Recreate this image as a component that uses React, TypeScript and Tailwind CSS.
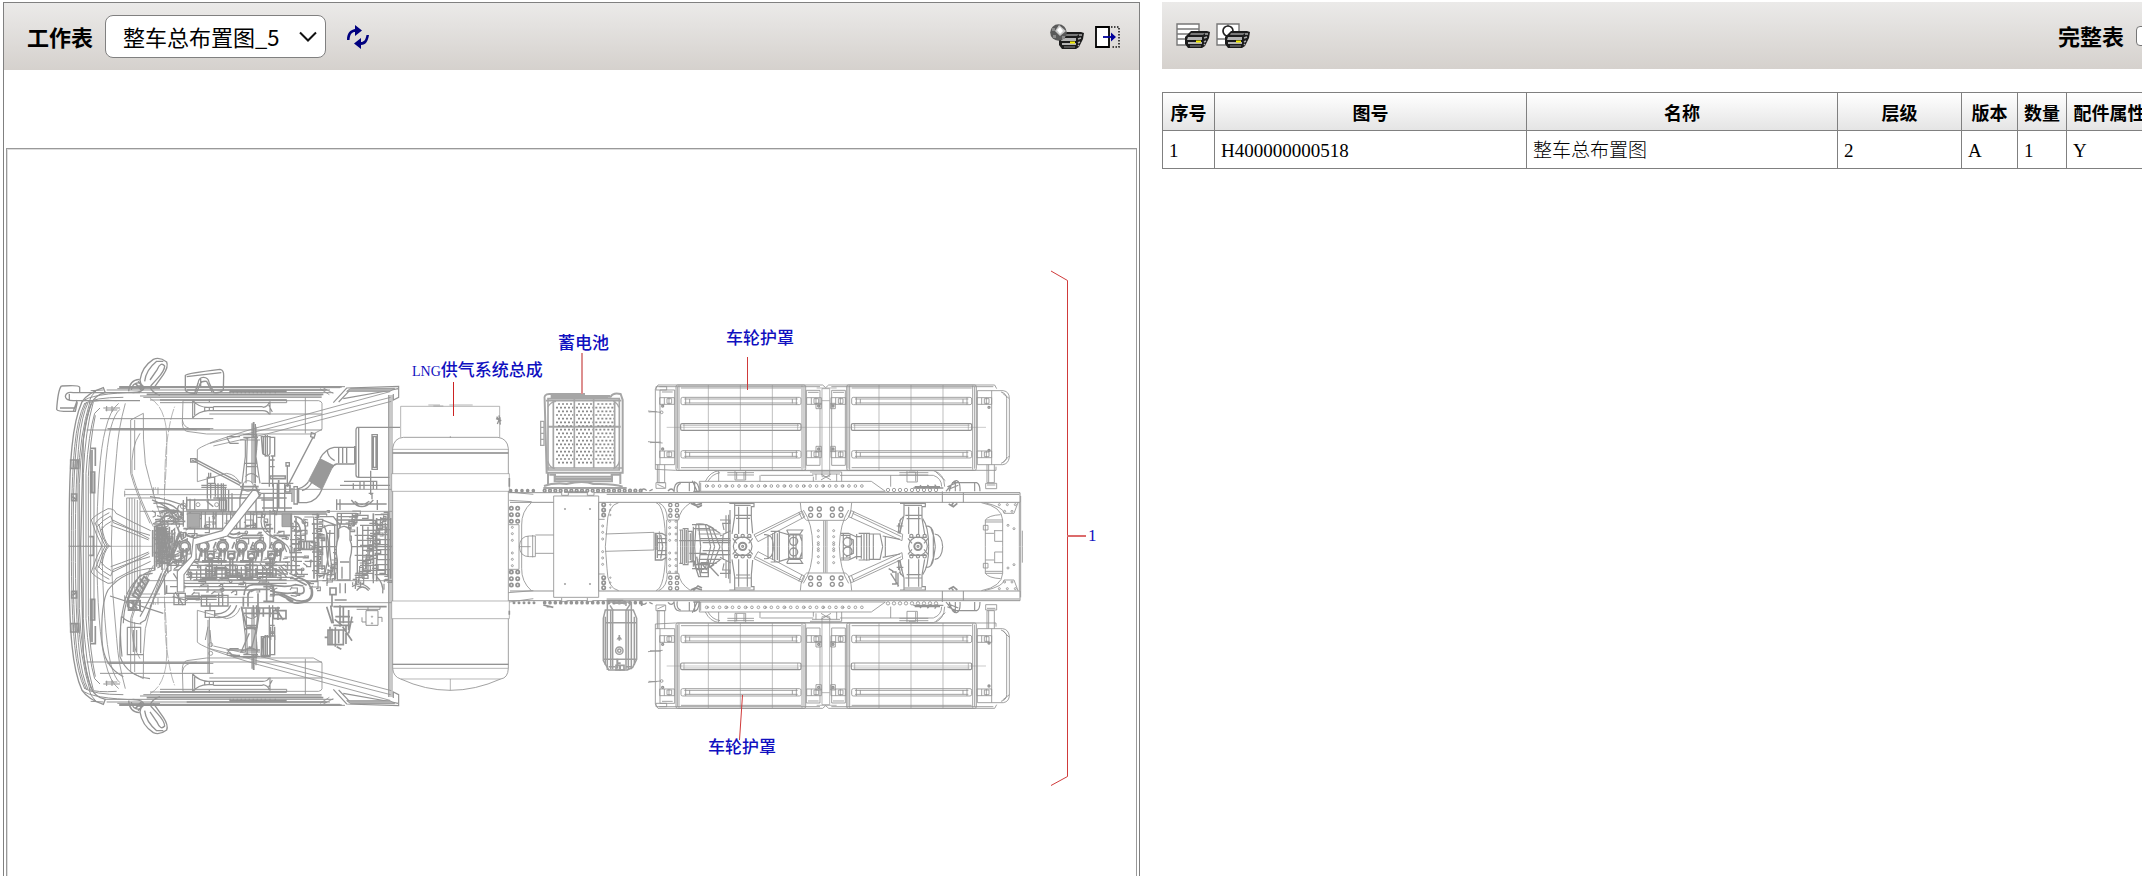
import { useState } from "react";

const range = (n: number) => Array.from({ length: n }, (_, i) => i);

const uiFont = "font-['Noto_Sans_CJK_SC',sans-serif]";

function RefreshIcon() {
  return (
    <svg width="22" height="24" viewBox="0 0 22 24" fill="#00007f">
      <path d="M0 15 C0 8 3 5 8 4 V0 L15 5.500 L8 11 V7 C5 7 3 9 2.500 15Z" />
      <path d="M22 10 C21 16 19 20 14 20 V24 L7 18.500 L14 13 V17 C17 17 18.500 15 19.500 10Z" />
    </svg>
  );
}

function Printer() {
  return (
    <g>
      <path d="M15 8 H31 L34 9 L33 15 L29 23 L26 25 H12 L9 21 V14Z" fill="#1c1c1c" />
      <path d="M15 10 H29 L27 12 H14Z" fill="#777" />
      <path d="M12 14 H26 V17 H11Z M12 19 H26 V21 H12Z" fill="#b4b4b4" />
      <path d="M14 23 H25" stroke="#888" />
      <path d="M20 17.500 H25 V19.500 H20Z" fill="#f4ee00" />
      <path d="M29 11 H32 M28 15 L31 14 M28 19 L30 18 M28 22 L29 21" stroke="#aaa" strokeWidth="1.500" />
    </g>
  );
}

function PrintViewIcon() {
  return (
    <svg width="34" height="25" viewBox="0 0 34 25">
      <Printer />
      <circle cx="8.500" cy="8.500" r="8.300" fill="#5a5a5a" />
      <path d="M2 4 H5 V7 H2Z M3 11 H6 V14 H3Z M12 12 H15 V15 H12Z" fill="#8a8a8a" />
      <path d="M9 1 L16 7 L10 12 L5 7Z" fill="#c9c9c9" />
      <path d="M10 3 L13 7 L10 10 L7 6Z" fill="#fff" />
    </svg>
  );
}

function ExpandIcon() {
  return (
    <svg width="25" height="22" viewBox="0 0 25 22" fill="none">
      <path d="M1 1 H14 V21 H1Z" fill="#fff" stroke="#000" strokeWidth="1.800" />
      <path d="M16 1 H24 V21 H16" stroke="#111" strokeWidth="1.500" strokeDasharray="1.500 1.500" />
      <path d="M8 11 H18" stroke="#00009b" strokeWidth="1.800" />
      <path d="M16 6.500 L21 11 L16 15.500Z" fill="#00009b" />
    </svg>
  );
}

function PrintListIcon() {
  return (
    <svg width="34" height="25" viewBox="0 0 34 25">
      <path d="M1 1 H23 V22 H1Z M1 6 H23 M1 11 H23 M1 16 H23" fill="#fff" stroke="#777" strokeWidth="1.400" />
      <Printer />
    </svg>
  );
}

function PrintDrawingIcon() {
  return (
    <svg width="34" height="25" viewBox="0 0 34 25">
      <path d="M1 1 H23 V22 H1Z M1 16 H23 M12 1 V16" fill="#fff" stroke="#777" strokeWidth="1.400" />
      <circle cx="12" cy="8" r="5" fill="#fff" stroke="#222" strokeWidth="1.700" />
      <Printer />
    </svg>
  );
}

function Holes({ x, y, n, dx, r = 4 }: { x: number; y: number; n: number; dx: number; r?: number }) {
  return (
    <>
      {range(n).map((i) => (
        <circle key={i} cx={x + i * dx} cy={y} r={r} />
      ))}
    </>
  );
}

function Bar({ x, y, w }: { x: number; y: number; w: number }) {
  return (
    <g>
      <rect x={x} y={y} width={w} height="22" rx="5" />
      <path d={`M${x + 10} ${y + 5} H${x + w - 10} M${x + 10} ${y + 17} H${x + w - 10} M${x + 14} ${y} v22 M${x + 26} ${y + 5} v13 M${x + w - 14} ${y} v22 M${x + w - 26} ${y + 5} v13`} />
    </g>
  );
}

// one fender plate with its three ribs
function Plate({ x }: { x: number }) {
  return (
    <g>
      <rect x={x} y="195" width="389" height="256" rx="5" />
      <path d={`M${x + 4} 200 V446 M${x + 9} 197 V449 M${x + 378} 197 V449 M${x + 384} 200 V446 M${x + 15} 204 H${x + 375} M${x + 15} 443 H${x + 375}`} />
      <path d={`M${x + 97} 195 V451 M${x + 193} 195 V451 M${x + 289} 195 V451`} strokeWidth="1.800" />
      <Bar x={x + 15} y={232} w={360} />
      <Bar x={x + 15} y={392} w={360} />
      <rect x={x + 14} y="311" width="361" height="20" rx="4" strokeWidth="3.500" />
      <path d={`M${x + 20} 316 H${x + 369} M${x + 24} 311 V331 M${x + 365} 311 V331`} strokeWidth="1.800" />
    </g>
  );
}

function Clamp({ x, y }: { x: number; y: number }) {
  return <path d={`M${x} ${y} h44 v20 h-44z M${x + 14} ${y} v20 M${x + 22} ${y + 3} h14 v14 h-14z M${x + 28} ${y} v20`} />;
}

function WheelCover() {
  return (
    <g>
      <path d="M46 208 L54 195 H548 L557 203 L566 195 H1064 L1070 206 M46 208 V448 L106 451 H1068 V440 M58 200 H540 M574 200 H1060" />
      <Plate x={108} />
      <Plate x={620} />
      <path d="M80 322 H1038" strokeWidth="1.500" />
      <path d="M60 210 H104 V434 H46 M60 210 V434 M66 216 H98 M48 200 H80 V210 H48Z M499 211 H540 V436 H499Z M575 211 H616 V436 H575Z M504 217 H536 M579 217 H612" />
      <path d="M546 206 H569 V470 H546Z M530 204 H590 M546 242 H569" strokeWidth="2" />
      <path d="M1012 212 H1090 Q1108 215 1108 235 V412 Q1105 432 1088 434 H1012Z M1055 212 V434 M1083 216 Q1100 220 1100 236 V410 Q1100 424 1083 430 M1088 220 L1108 236 M1088 428 L1108 408" />
      {[233, 393].map((y) => (
        <g key={y}>
          <Clamp x={59} y={y} />
          <Clamp x={500} y={y} />
          <Clamp x={573} y={y} />
          <Clamp x={1011} y={y} />
        </g>
      ))}
      <path d="M528 250 H544 V266 H528Z M572 250 H586 V266 H572Z M528 379 H544 V395 H528Z M572 379 H586 V395 H572Z" />
      {[258, 387].map((y) => (
        <g key={y} strokeWidth="4">
          <circle cx="536" cy={y} r="3" />
          <circle cx="579" cy={y} r="3" />
          <circle cx="68" cy={y} r="3" />
          <circle cx="1047" cy={y + 4} r="3" />
        </g>
      ))}
      <path d="M24 273 L62 277 M26 276 L50 275 M24 365 L68 369 M30 368 L62 366" />
      <circle cx="65" cy="277" r="4" />
      <path d="M52 434 V488 H74 V434 M57 434 V488 M48 488 H77 V505 H48Z M52 493 L74 503 M1041 434 V488 H1063 V434 M1046 434 V488 M1037 490 H1070 V506 H1037Z M1041 495 H1066" />
      <path d="M285 452 V480 H317 V452 M290 456 V478 M312 456 V478 M262 458 H342 M262 465 H342 M801 452 V486 H832 V452 M806 456 H827 V484 M778 458 H865 M778 465 H865" />
      <path d="M196 484 Q210 455 238 452 H880 Q913 460 914 500 M204 484 Q216 462 240 458 M236 452 V484 M360 466 V484 M362 466 H520 M600 466 H880 M752 466 V500 M880 466 Q905 475 905 500 M888 456 L916 482" />
      <path d="M178 484 H694 L736 514 H178Z M182 488 V514 M510 456 H605 V484 M516 462 H600 M520 470 V484 M528 462 V480 M590 462 V484 M543 462 L573 480 M573 462 L543 480" />
      <Holes x={200} y={498} n={25} dx={19.4} />
      <Holes x={204} y={498} n={8} dx={58} r={2} />
      <path d="M102 516 Q102 488 118 487 H160 Q176 484 178 516 M112 516 Q108 495 122 490 M148 488 V514 M157 482 L172 515 M164 484 V514 M928 514 Q936 480 950 482 Q962 486 960 514 M936 488 H1010 Q1020 492 1020 514 M1004 490 V514 M946 482 V514 M922 500 L950 488 M926 508 L955 496 M918 514 L934 494" strokeWidth="3.500" />
      <Holes x={744} y={510} n={9} dx={18} r={5} />
      <path d="M820 504 H910 M824 500 H900 M840 496 L850 506 M862 495 L874 507 M884 494 L894 507" strokeWidth="4" />
      <path d="M2 512 Q12 502 20 512 M28 513 L38 508 M84 513 Q94 501 102 513 M160 514 H178" strokeWidth="4" />
    </g>
  );
}

// the half of the frame above the centre line
function FrameHalf() {
  return (
    <g>
      <path d="M-393 518 H1140 V547 H-390 M-100 523 H1138 M907 514 V547 M970 518 V547" strokeWidth="3" />
      <path d="M48 548 Q76 556 77 680 M56 548 Q82 560 82 600 H116 Q118 570 152 548 M112 600 V680 M80 600 V680" />
      {range(3).map((i) => (
        <g key={i} strokeWidth="4">
          <circle cx="91" cy={555 + i * 16} r="5" />
          <circle cx="111" cy={555 + i * 16} r="5" />
        </g>
      ))}
      {range(4).map((i) => (
        <g key={i}>
          <circle cx="89" cy={604 + i * 19} r="3" />
          <circle cx="108" cy={604 + i * 19} r="3" />
          <circle cx="535" cy={632 + i * 18} r="3" />
          <circle cx="581" cy={632 + i * 18} r="3" />
        </g>
      ))}
      <path d="M481 548 Q483 590 500 601 H617 Q633 590 635 548 M490 570 Q518 610 518 680 M626 570 Q600 610 598 680 M551 602 V680 M556 602 V680 M561 602 V680" />
      {[512, 538, 577, 603].map((x) => (
        <g key={x} strokeWidth="4">
          <circle cx={x} cy="567" r="6" />
          <circle cx={x} cy="586" r="6" />
        </g>
      ))}
      <path d="M342 644 L486 573 L494 591 L354 665Z M346 650 L484 580 M476 576 L486 596 M788 643 L634 572 L626 590 L786 662Z M784 650 L638 580 M642 574 L634 594" />
      <path d="M268 550 H342 V560 H334 V595 L338 640 M284 550 V590 L276 642 M286 556 H332 M286 586 H334 M288 595 H330 M296 560 V642 M322 560 V642 M270 570 V680 M780 550 H856 V560 H846 V595 L854 642 M792 550 V586 L778 640 M794 556 H846 M796 586 H846 M800 596 H842 M806 560 V642 M836 560 V642" strokeWidth="3.500" />
      <path d="M118 630 H128 V680 M128 626 H144 V680 M144 634 H156 V680 M156 614 H200 L240 640 M160 620 V680 M168 616 L164 680 M176 614 L182 680 M196 614 L212 680 M206 618 L224 680 M216 622 L240 680 M160 626 H210 M168 612 Q196 608 222 626 M240 600 H270 V610 H248 L252 630 M258 586 V640 M266 584 V680 M240 648 L272 632 M230 656 H270 M250 640 L246 680" strokeWidth="3.500" />
      <path d="M122 630 V680 M134 626 V680 M139 630 V680 M151 640 V680 M172 630 H230 M176 642 H244 M180 656 H262 M188 668 H270" strokeWidth="3.500" />
      <path d="M44 640 H66 L80 648 M46 640 V680 M52 646 V680 M62 644 L68 680 M50 656 H80 M50 668 H80" strokeWidth="4" />
      <path d="M392 634 H418 V680 M398 640 V680 M404 634 V680 M412 640 V680 M418 636 L446 644 V680 M440 630 H488 L480 642 H448 M440 630 L450 650 M450 645 H486 V680 M460 645 V680 M468 642 V680 M478 642 L486 664 M384 646 V680 M372 644 Q400 640 400 680" strokeWidth="3.500" />
      <circle cx="461" cy="664" r="12" strokeWidth="4" />
      <path d="M602 640 H626 L648 650 H664 V680 M602 646 H630 V680 M610 640 V680 M618 650 L640 660 V680 M650 642 V680 M656 640 H688 V680 M664 644 V680 M672 640 V680 M680 638 V680 M688 642 H720 L728 680 M700 642 V680 M728 648 L780 658 M736 650 V680" strokeWidth="3.500" />
      <circle cx="623" cy="666" r="13" strokeWidth="4" />
      <path d="M856 618 Q876 616 880 640 V680 M848 596 Q866 620 866 680 M872 622 Q884 650 886 680 M884 642 Q906 644 908 680 M778 604 L790 590 M776 610 V640 M770 618 H790 M782 596 L774 640 M786 608 L780 640" strokeWidth="3.500" />
      <path d="M1024 548 Q1086 560 1088 600 V680 M1034 548 Q1092 562 1092 580 H1122 L1134 548 M1142 528 V680 M1147 632 V680 M1138 548 V680 M1036 600 H1088 M1036 606 H1088 M1036 600 V680 M1036 600 Q1046 586 1082 584 M1030 616 H1044 V630 H1030Z M1062 632 H1088 M1064 632 V664 H1088 M1036 640 H1062" />
      {[[1078, 554], [1102, 554], [1126, 554], [1094, 574], [1116, 574], [1104, 616], [1122, 626]].map(([x, y]) => (
        <circle key={x} cx={x} cy={y} r="3" />
      ))}
      <path d="M152 550 L166 556 L186 550 M160 548 L174 562 L186 556 M926 552 L940 560 L952 550 M940 548 L934 558" strokeWidth="5" />
    </g>
  );
}

function Hub({ x }: { x: number }) {
  return (
    <g strokeWidth="3.500">
      <circle cx={x} cy="679" r="28" fill="#fff" />
      <circle cx={x} cy="679" r="11" strokeWidth="6" />
      <circle cx={x} cy="679" r="3" />
      <path d={`M${x - 26} 652 h52 M${x - 26} 706 h52 M${x - 30} 655 L${x - 18} 670 M${x + 30} 655 L${x + 18} 670 M${x - 30} 703 L${x - 18} 688 M${x + 30} 703 L${x + 18} 688`} />
      {[-20, 0, 20].map((d) => (
        <g key={d}>
          <circle cx={x + d} cy="648" r="5" />
          <circle cx={x + d} cy="709" r="5" />
        </g>
      ))}
    </g>
  );
}

function Rear() {
  return (
    <g transform="translate(640 320) scale(.33333)">
      <WheelCover />
      <g transform="translate(0 1360) scale(1 -1)">
        <WheelCover />
      </g>
      <FrameHalf />
      <g transform="translate(0 1360) scale(1 -1)">
        <FrameHalf />
      </g>
      <path d="M118 662 H272 M148 700 H200 M160 720 L176 770 H205 V720 M184 728 H204 V758 H184Z M188 734 L200 750 M205 735 L236 768 M170 710 L182 768 M150 724 H166 V742 M756 756 H768 V792 H756 M752 760 L776 798 M746 746 L760 754 M774 758 V800" strokeWidth="4" />
      <Hub x={308} />
      <Hub x={834} />
    </g>
  );
}

function Tank() {
  return (
    <g transform="translate(380 320) scale(.33333)">
      <path d="M38 385 Q42 354 70 352 H354 Q382 356 385 385 V1045 Q384 1074 362 1077 Q210 1145 62 1077 Q40 1070 38 1045Z" fill="#fff" />
      <path d="M62 352 V259 H359 V352 M145 255 H180 M160 258 H190 M208 255 H278 M38 388 H385 M38 399 H385 M38 1033 H385 M38 1045 H385 M62 1077 H362" strokeWidth="2" />
      <path d="M38 399 H385 M38 1033 H385" strokeWidth="4" />
      <path d="M35 461 H388 V514 H35Z M35 843 H388 V896 H35Z" fill="#fff" strokeWidth="2" />
      <path d="M211 348 V354 M211 1077 V1112" strokeWidth="2" />
      <path d="M350 290 L357 300 L352 312 M360 292 V310 M348 296 L364 302 M357 286 L361 314" strokeWidth="4" />
      <path d="M385 516 L460 523 M388 541 L455 545 M385 818 L460 812 M388 846 L460 836" />
      <path d="M521 528 H656 V832 H521Z M545 516 V526 H565 V516 M622 516 V526 H642 V516 M545 834 V844 H565 M622 834 V844 H642" fill="#fff" />
      <g>
        <circle cx="555" cy="567" r="2" />
        <circle cx="630" cy="567" r="2" />
        <circle cx="555" cy="792" r="2" />
        <circle cx="630" cy="792" r="2" />
      </g>
      <path d="M454 548 Q424 575 425 615 V745 Q424 785 454 812 M716 548 Q682 555 681 620 L676 680 L681 745 Q682 805 716 812 M386 614 H417 V748 H386 M656 598 H674 M656 762 H674 M656 548 V812" />
      {[565, 584, 604, 756, 776, 795].map((y) => (
        <g key={y} strokeWidth="5">
          <circle cx="394" cy={y} r="5" />
          <circle cx="413" cy={y} r="5" />
        </g>
      ))}
      {[554, 570, 585, 773, 788, 803].map((y) => (
        <g key={y}>
          <circle cx="671" cy={y} r="5" strokeWidth="5" />
          <circle cx="691" cy={y} r="2" />
        </g>
      ))}
      {[622, 641, 661, 699, 718, 737].map((y) => (
        <g key={y}>
          <circle cx="397" cy={y} r="3" />
          <circle cx="668" cy={y - 4} r="3" />
        </g>
      ))}
      <path d="M418 680 Q420 648 448 648 H466 V710 H448 Q420 710 418 680Z M458 645 V712 M466 645 H521 M466 700 H521 M444 648 V710 M418 680 H452 M676 642 L822 637 M676 694 L822 690 M822 637 V690 M830 640 V690 M838 634 V690" />
      <g strokeWidth="5">
        <Holes x={392} y={512} n={5} dx={17} r={3} />
        <Holes x={494} y={512} n={19} dx={16} r={4} />
        <Holes x={402} y={848} n={5} dx={15} r={2} />
        <Holes x={494} y={848} n={19} dx={16} r={3} />
        <path d="M388 474 V500 M388 872 V884 M490 855 L520 862 M500 860 H510 M552 516 H620 M680 842 H730 M785 842 V858" />
      </g>

      {/* battery box */}
      <g stroke="#a6a6a6">
        <path d="M494 240 Q490 222 508 222 H612 V230 H692 Q700 216 722 222 L728 240 V458 H500Z" strokeWidth="6" />
        <path d="M504 236 V450 H718 V236Z M520 240 V446 M704 240 V446 M498 242 H724 M500 444 H726 M583 236 V446 M641 236 V446" strokeWidth="5" />
        <path d="M504 320 H722 M512 228 H690 M512 234 H684" strokeWidth="6" />
        <path d="M504 260 Q512 246 528 244 M700 244 Q714 250 716 262 M504 424 Q508 442 524 446 M700 446 Q716 438 718 424 M482 304 H492 V376 H482Z M482 322 H492 M482 340 H492 M482 358 H492" strokeWidth="4" />
        <path d="M504 458 V492 M721 458 V492 M524 470 H696 V484 H524Z M526 477 H694 M508 464 H528 M692 464 H718 M492 498 Q520 488 560 492 Q610 480 640 492 Q700 490 728 500 M490 504 H740" strokeWidth="6" />
        <g stroke="#8a8a8a" strokeWidth="5" strokeDasharray="6 6">
          {range(17).map((i) => (
            <path key={i} d={`M${i % 2 ? 528 : 534} ${252 + i * 11} H580 M${i % 2 ? 588 : 594} ${252 + i * 11} H638 M${i % 2 ? 646 : 652} ${252 + i * 11} H702`} />
          ))}
        </g>
      </g>

      {/* air reservoir */}
      <g strokeWidth="4.500" stroke="#9e9e9e">
        <path d="M676 870 H760 L770 895 V1018 L758 1042 L742 1050 H686 L670 1022 V895Z" />
        <path d="M682 842 V1050 M692 870 V1048 M698 870 V1048 M738 870 V1048 M745 870 V1048 M754 846 V1048 M674 908 H768 M672 1018 H768 M676 890 V1035 M763 890 V1035 M686 846 H754 M690 856 L700 872 M738 872 L752 850 M704 850 H738 V858 M686 1040 H706 M736 1040 H752" />
        <path d="M718 945 V962 M714 956 Q718 950 722 956Z M708 1036 V1050 H732 V1036Z" strokeWidth="5" />
        <circle cx="718" cy="992" r="11" />
        <circle cx="718" cy="992" r="5" />
        <path d="M712 1016 V1046 M722 1030 H714 M720 1038 V1052" strokeWidth="6" />
      </g>
    </g>
  );
}

// shell of the cab above the centre line
function CabHalf() {
  return (
    <g>
      <path d="M88 619 Q86 420 96 320 Q104 235 126 185 Q145 158 190 143 L196 158 Q165 165 155 190 Q138 225 130 300 L122 619" strokeWidth="4" />
      <path d="M94 619 Q94 420 104 320 Q112 235 134 190 M106 619 Q106 410 118 300 Q126 225 144 188 M114 619 V420 Q120 280 150 185 M130 619 V400 Q136 270 160 186 M138 619 V400 Q146 280 164 220 L180 204 M152 619 V330 M162 619 V400" strokeWidth="3" />
      <path d="M100 619 Q98 420 110 310 Q118 232 140 186 M118 619 V430 Q124 290 153 190 M145 619 V410 Q150 300 166 226" strokeWidth="3" />
      <path d="M92 360 H116 V385 H92Z M95 462 H110 V482 H95Z M152 325 H166 V378 M152 396 H164 V458 H152Z M148 590 H160 V619 M98 470 L108 478 M156 330 V455 M100 364 V382 M108 362 V384" strokeWidth="5" />
      <path d="M126 186 Q150 160 300 156 M132 192 Q160 172 250 172 M146 188 Q170 178 230 182 M152 152 L190 150 M170 150 Q150 170 148 184 M190 204 H240 M196 210 H232 M200 198 V214 M216 198 V216" strokeWidth="3" />
      <path d="M170 619 Q172 360 196 270 Q210 210 236 190 M186 619 Q190 360 212 265 Q224 220 240 208 M214 619 Q214 480 230 340 Q234 270 256 190" />
      <path d="M376 619 Q370 440 378 330 Q388 240 404 200 M330 175 Q368 195 378 260 Q384 320 374 450" strokeWidth="2" strokeDasharray="34 4" />
      <path d="M238 140 H915 M238 143 H900 M200 150 H870 M196 158 H880 M300 168 H845 M310 172 H845 M330 180 H740 V188 H360 M232 146 H360 M180 236 H520 M140 270 H846 M202 266 H520" strokeWidth="3" />
      <path d="M238 141 H905 M205 267 H510 M440 150 H860 M570 154 H740 M320 163 H850 M360 180 H740" strokeWidth="5" />
      <path d="M570 152 V160 M580 150 V160 M592 152 V160 M604 150 V160 M616 150 V160 M628 152 V160 M640 150 V160 M652 152 V160 M664 150 V160 M676 152 V160 M690 150 V160 M706 150 V160" strokeWidth="4" />
      <path d="M429 182 H836 Q845 184 846 190 V268 L820 282 H500 L440 274 Q428 270 427 250Z M796 172 V280 M427 240 Q430 268 470 270" />
      <path d="M458 180 V234 M458 180 Q474 202 504 202 H520 V212 H504 Q476 214 458 234 M520 200 H668 M520 212 H668 M690 184 V224 M668 202 Q684 200 688 186 M668 212 Q684 212 688 224 M686 195 L697 216 M508 178 V186 M508 222 H846 M464 190 V226 M494 202 V214 M508 200 V214" strokeWidth="3.500" />
      <path d="M472 330 Q472 325 520 305 Q620 270 700 250 L1050 155 M472 330 V425 L560 400 Q590 404 600 432 M510 310 L1052 172 M520 318 L680 282 L1054 184" />
      <path d="M880 188 L920 144 L1076 139 V172 L1060 180 V162 M896 186 L932 148 M910 176 L1056 150 L1074 146" strokeWidth="3.500" />
      <path d="M920 154 L932 145 H1064 L1050 154 Z" fill="#b2b2b2" />
      <path d="M840 146 L868 164 M850 144 L880 160" />
      <path d="M306 148 L300 120 Q306 80 340 58 Q360 50 380 66 Q386 80 370 104 L340 146 M314 124 Q318 90 350 64 L370 64 M330 120 L352 88 Q362 64 374 78 Q374 92 352 116 L332 138 M266 154 Q268 120 298 118 M274 150 Q276 128 300 128 M278 158 Q310 158 314 140 H330 Q336 158 360 166" strokeWidth="4" />
      <path d="M286 130 L304 150 M294 124 L310 140 M300 142 H312 M290 138 H308" strokeWidth="5" />
      <path d="M300 280 Q272 320 276 400 Q296 470 340 560 M272 240 L310 220 M272 240 V400 Q288 460 330 550 M310 220 Q308 300 316 370 Q340 470 370 550 M284 240 V390" />
      <path d="M154 540 Q160 528 204 506 Q224 506 228 520 Q280 548 332 572 M164 552 Q176 534 208 518 M172 560 Q188 540 212 528 L220 548 Q270 570 330 586 M180 574 Q194 552 214 544 M218 540 Q280 570 328 596 M212 556 Q280 580 326 600 M154 540 Q166 580 186 619 M166 550 Q180 590 196 619 M186 560 Q190 600 208 619 M176 552 Q184 590 202 619" strokeWidth="3" />
      <path d="M254 448 H1056 M254 452 V470 M260 474 V619 M254 464 H640 M276 474 V619 M268 474 V619 M284 476 V619 M292 480 V619 M300 484 V619 M260 474 H360 M300 514 H1056 M340 442 V462 M354 442 V462 M346 442 V446" />
      <path d="M610 284 H650 V330 M616 300 V350 L606 430 M622 290 L618 430 M652 300 L648 350 L660 430 M636 250 V430 M642 246 V430 M648 260 V370 M600 300 H660 M610 292 H654 M614 370 H650 M620 380 H650 M616 410 Q634 390 654 412 M560 292 L570 310 H596 M562 290 H600 M640 246 V292" strokeWidth="3.500" />
      <path d="M664 290 H690 V340 Q684 356 668 340Z M670 290 V345 M676 285 V350 M682 285 V345 M692 292 H704 V348 H692 M688 348 V440 M698 348 V440 M690 360 H704 M690 380 H704" strokeWidth="4" />
      <path d="M1046 165 V619 M1050 165 V619 M1056 165 V619" strokeWidth="3" />
    </g>
  );
}

// pipes, bolts and brackets scattered over the powertrain
function Fittings() {
  return (
    <g strokeWidth="3.500">
      {range(90).map((i) => {
        const x = 400 + ((i * 137) % 450);
        const y = 512 + ((i * 71) % 250);
        return <path key={i} d={`M${x} ${y} h${8 + (i % 5) * 5} v${6 + (i % 4) * 5} h-${6 + (i % 3) * 4} M${x - 4} ${y + 6} l${6 + (i % 6) * 3} ${(i % 7) * 3 - 9}`} />;
      })}
      {range(70).map((i) => {
        const x = 860 + ((i * 53) % 180);
        const y = 512 + ((i * 89) % 218);
        return <path key={i} d={`M${x} ${y} h${8 + (i % 5) * 4} v${5 + (i % 4) * 4} h-${6 + (i % 3) * 4} M${x} ${y + 9} v${6 + (i % 5) * 3}`} />;
      })}
      {range(40).map((i) => {
        const x = 336 + ((i * 37) % 90);
        const y = 512 + ((i * 61) % 180);
        return <path key={i} d={`M${x} ${y} l${10 + (i % 4) * 4} ${6 - (i % 5) * 4} v${10 + (i % 3) * 4} l-8 4`} />;
      })}
      {range(26).map((i) => (
        <circle key={i} cx={400 + ((i * 97) % 460)} cy={516 + ((i * 43) % 240)} r={3 + (i % 3)} />
      ))}
    </g>
  );
}

function Engine() {
  return (
    <g>
      {/* intake hose and filter box */}
      <path d="M456 360 L600 436 M462 356 L604 430 M820 290 L742 440 M742 376 V440 M646 252 V430" strokeWidth="4" />
      <path d="M452 356 H468 V366 H452Z M738 368 H748 V378 H738Z M814 278 L826 282 L822 294 L812 290Z" strokeWidth="4" />
      <path d="M950 262 H1080 M952 262 Q948 264 948 270 V404 Q948 412 956 412 H1048 M956 262 V410 M944 318 V372 M948 322 H882 Q856 326 840 356 M944 372 H890 Q880 374 876 384" strokeWidth="4" />
      <path d="M840 356 L880 376 L846 448 L806 422Z" fill="#999" />
      <path d="M806 424 Q796 440 776 446 V488 H800 Q832 484 846 448 M816 426 Q806 446 786 452 M762 440 H772 V492 H762Z M756 444 V486 M862 330 Q862 350 884 362 M896 322 V370 M908 322 V370 M920 322 V370" strokeWidth="4" />
      <path d="M996 284 H1012 V388 H996Z M1000 290 H1008 V382 H1000Z M992 392 V464 M996 458 V478 M986 460 H1000" strokeWidth="4" />
      <path d="M900 436 H1050 M912 424 H1010 V448 M940 430 V448 M960 426 V448 M972 426 V448 M1000 424 V448 M890 478 V510 M900 478 V510 M934 480 Q964 520 1000 480 M944 484 Q964 504 988 484 M888 492 H1040 M1012 480 V510" strokeWidth="4" />

      <Fittings />

      {/* block outline and rails */}
      <path d="M440 480 H560 V510 H440Z M450 476 V512 M464 476 V512 M504 476 V512 M538 476 V512 M450 516 V566 H520 V516 M528 516 V566 H590 V516 M600 516 V566 H650 V516 M440 516 H860 M440 522 H860 M520 474 H740 M600 476 V516 M648 474 V516 M672 460 V514 M700 430 V514 M712 430 V514 M734 430 V514 M664 430 H760 M664 460 H756 M666 504 H756" strokeWidth="4" />
      <path d="M442 520 H480 V562 H442Z M726 522 H752 V560 H726Z" fill="#aaa" />
      <path d="M484 516 V566 M496 516 V566 M508 530 V566 M548 516 V566 M560 520 V566 M572 516 V566 M616 520 V566 M632 516 V566 M640 520 V566 M690 510 V620 M704 510 V580 M676 520 Q664 560 690 580 M668 520 Q650 570 700 594 Q750 610 750 640 M690 584 Q730 600 740 636" strokeWidth="3.500" />
      <path d="M430 566 H700 M436 576 Q440 592 462 590 M550 576 Q576 606 610 586 M560 572 Q576 592 600 576 M606 586 H670 M606 594 H664 M470 586 H540 M700 586 H750" strokeWidth="5" />
      <path d="M502 412 H524 V430 H502Z M506 398 V412 M512 398 V412 M502 430 V476 M512 430 V476 M484 436 H560 M484 442 H560 M526 430 V470 M534 430 V476 M544 430 V516 M550 430 V516 M556 440 V516 M566 450 V516 M576 460 V516 M500 484 L520 500" strokeWidth="4" />
      <circle cx="474" cy="494" r="6" />
      <circle cx="530" cy="494" r="6" />
      {[434, 490, 548, 604, 660, 716].map((x) => (
        <g key={x} strokeWidth="5">
          <circle cx={x} cy="619" r="17" fill="#fff" />
          <circle cx={x} cy="619" r="12" />
          <path d={`M${x - 8} 636 L${x - 14} 664 M${x + 8} 636 L${x + 4} 664 M${x - 5} 624 V650 M${x + 5} 624 V650 M${x - 20} 606 L${x - 28} 626`} />
        </g>
      ))}
      {[512, 574, 634, 694].map((x) => (
        <g key={x} strokeWidth="5">
          <path d={`M${x - 10} 634 H${x + 10} V654 H${x - 10}Z M${x - 4} 654 V714 M${x + 4} 654 V714 M${x - 18} 676 H${x + 18} M${x - 14} 684 V708 H${x + 14} V684`} />
          <circle cx={x} cy="650" r="9" />
        </g>
      ))}
      <path d="M396 666 H750 M380 676 H750 M400 690 H760 M440 702 H744 M440 712 H760 M460 720 H740 M400 700 L420 730 H740 M390 740 H620 M440 770 H530 M440 778 H530 M460 750 H640" strokeWidth="4" />
      <path d="M486 664 H560 M600 664 H640 M520 684 H560 M560 708 H610 M648 700 H700 M484 716 H530 M600 716 H640" strokeWidth="8" />
      <path d="M452 694 V720 M470 694 V720 M482 676 V716 M498 680 V716 M530 674 V716 M546 680 V720 M556 676 V716 M592 676 V718 M604 680 V718 M616 676 V716 M652 676 V718 M668 680 V716 M676 670 L726 700 M680 690 L710 664 M716 680 L740 712 M722 678 L744 700 M660 670 L676 690" strokeWidth="4" />

      {/* cross pipe */}
      <path d="M640 448 L546 572 L460 596 L454 650 L412 694 V756 H432 V704 L468 656 V614 L562 588 L664 460Z" fill="#fff" strokeWidth="3.500" />

      {/* front accessory drive */}
      {range(9).map((i) => (
        <g key={i} strokeWidth="5">
          <path d={`M${342 + (i % 3) * 4} ${560 + i * 13} L${376 + (i % 4) * 8} ${552 + i * 14} M${352 + i * 3} 560 L${350 + i * 6} 650 M${344 + i * 2} ${572 + i * 12} h26 v8`} />
        </g>
      ))}
      <path d="M344 560 V690 M350 556 V680 M358 560 V680 M366 550 V690 M372 540 L384 700 M338 570 V650 M388 560 V650 M396 570 V640 M404 576 L400 660 M412 560 L426 600 M340 552 H430 M346 544 H436 M348 660 H396 M352 670 H390 M416 580 L382 680 M424 574 L390 650 M420 600 L374 700" strokeWidth="5" />
      <path d="M330 470 Q380 476 440 500 M340 490 Q400 480 430 530 M336 480 Q390 500 420 540 M350 500 Q400 500 410 560 M360 520 Q390 500 430 520 M370 530 Q380 510 410 516 M420 490 Q400 520 430 540 M430 480 V560 M440 470 V500 M360 540 Q384 516 414 540" strokeWidth="4" />
      <circle cx="382" cy="526" r="16" />
      <circle cx="430" cy="498" r="9" />

      {/* lower intake and steering column */}
      <path d="M346 684 Q250 690 204 750 Q182 790 186 900 Q190 980 250 1010 M346 690 Q290 700 262 760 Q236 830 240 950 M338 700 L300 706 Q264 760 262 800 M372 700 Q340 780 316 840 L300 850 M364 700 Q330 780 300 830 M380 700 Q350 760 330 800 M210 768 L370 820 M262 800 L310 816 M246 830 Q262 850 304 852 M262 862 H302 V940 M262 862 V944 H310 M240 950 Q262 1010 330 1016 M280 870 V936 M290 870 V936 M244 830 Q238 880 246 950 M300 706 Q252 770 250 850" strokeWidth="3.500" />
      <path d="M312 710 L326 720 L296 776 L278 766Z M300 716 L316 736 M294 728 L310 748 M288 740 L302 762 M282 752 L298 770 M266 782 H300 V810 H266Z M274 786 L292 806 M292 786 L272 808 M280 784 V808" strokeWidth="6" />
      <path d="M402 760 H436 V794 H402Z M398 770 L442 782 M406 756 L430 796 M416 762 V792 M380 736 V760 H410 M372 704 L376 764 M436 768 H480 M436 776 H480 M484 766 H564 V798 H484Z M500 766 V798 M536 760 V798 M548 760 V798 M510 790 V812 M496 812 H524 V832 H496Z M524 832 Q576 838 590 796 M524 822 Q560 824 572 796" strokeWidth="4" />
      <path d="M508 830 V1000 M504 840 V1000 M504 860 L496 900 M510 870 L514 920" strokeWidth="3" />
      <circle cx="512" cy="914" r="6" />
      <circle cx="512" cy="940" r="6" />
      <path d="M604 800 L620 862 H650 L656 800 M604 804 H720 M612 820 H720 M640 796 V830 M650 796 V826 M670 804 V830 M690 806 V832 M700 812 H738 V836 H700Z M706 806 L730 840 M714 800 V840 M610 770 V800 M624 760 V800 M654 760 V800 M612 766 Q612 736 640 734 H690 M624 766 Q626 748 646 748 H690" strokeWidth="5" />
      <path d="M690 734 Q740 744 766 734 L790 738 M690 752 Q740 766 770 756 M690 764 H730 L770 782 Q820 790 814 748 Q806 718 770 712 M740 776 Q760 796 796 786 Q826 776 814 740 M766 760 Q800 768 790 740 M748 700 L812 728 M754 712 L800 736 M670 740 H700 V784 H670 M680 736 V786 M708 760 L760 784" strokeWidth="5" />
      <path d="M616 870 Q634 850 648 872 L636 920 L604 934 L628 880 M626 920 L650 930 M664 890 H690 V950 H664Z M670 890 V950 M676 885 V950 M682 885 V950 M560 930 H660 M568 936 L580 950 H660 M692 860 V900 M704 860 V900 M690 880 H706" strokeWidth="4" />

      {/* gearbox */}
      <path d="M762 530 Q790 530 796 560 V606 M762 544 Q780 546 782 580 V606 M776 604 H824 V628 H776Z M784 604 V628 M792 604 V628 M800 604 V628 M808 604 V628" strokeWidth="5" />
      {[754, 768, 822, 832, 892, 900, 1000, 1010, 1036, 1044, 1052].map((x, i) => (
        <path key={x} d={`M${x} ${520 + (i % 3) * 14} V${700 + (i % 4) * 8}`} strokeWidth="5" />
      ))}
      {range(13).map((i) => (
        <path key={i} d={`M${750 + (i % 3) * 6} ${560 + i * 13} h${24 + (i % 4) * 6} M${816 + (i % 2) * 6} ${524 + i * 14} h${20 + (i % 3) * 6} v8 h-12 M${944 + (i % 4) * 8} ${526 + i * 15} h${40 + (i % 3) * 14} v9 h-18 M${1004 + (i % 2) * 6} ${524 + i * 15} h40`} strokeWidth="4" />
      ))}
      <path d="M840 570 Q856 552 884 556 M836 580 V690 M846 580 V690 M852 556 Q880 620 850 716 M860 576 Q856 620 866 680 M870 570 Q864 620 878 696 M884 556 V720 M862 580 H884 M836 620 H1056 M846 540 L890 556 M836 712 L880 690 M838 530 H880 L896 550" strokeWidth="4" />
      <path d="M896 566 Q914 550 930 570 V600 Q940 620 930 656 V720 H892 V660 Q884 620 896 590Z" fill="#fff" strokeWidth="4" />
      <path d="M892 520 H948 V552 H892Z M892 530 H948 M892 540 H948 M904 520 V552 M900 666 H928 M906 680 V716 M946 540 H1000 V560 M952 560 V700 M968 556 V690 M984 560 V700 M946 700 H1000 V730 M936 740 Q964 720 990 748 M950 752 Q966 730 986 752 M900 730 V760 M916 730 V760 M1010 710 Q1032 730 1028 760" strokeWidth="4" />
      <path d="M870 744 H888 V764 H870Z M876 764 V800 M884 780 H920 M860 800 L876 850 M872 796 L880 850 M880 800 H1040 M900 796 V860 M886 830 H930 M892 846 H940 M910 800 V850 M926 810 V870 M936 830 L926 880 M864 870 H910 V914 H864Z M870 860 V912 M876 866 V916 M886 862 V920 M896 870 V910 M908 860 L936 902 M918 856 V912 M854 892 H864 M890 920 L904 928 M880 856 H926 M884 838 L906 856" strokeWidth="5" />
      <path d="M978 812 H1014 V856 H978Z M966 832 V846 H978 M1014 832 H1026 V846 M950 800 H1020 V808 H950 M984 800 V812" strokeWidth="3" />
      <circle cx="996" cy="830" r="2" />
      <circle cx="996" cy="850" r="2" />
      <circle cx="624" cy="438" r="16" />
      <path d="M600 440 H656 M604 450 H660 M610 430 L600 476 M644 432 L660 470 M736 436 H750 V456 H736Z M690 408 H736 V416 H690Z M716 420 V504 M664 480 H700" strokeWidth="5" />
      <path d="M90 619 H214 M86 619 H340" strokeWidth="2" />
    </g>
  );
}

function Cab() {
  return (
    <g transform="translate(40 340) scale(.33333)">
      <CabHalf />
      <g transform="translate(0 1236) scale(1 -1)">
        <CabHalf />
      </g>
      <path d="M64 138 Q118 134 119 142 V160 M64 138 Q54 150 50 208 Q52 216 106 214 L112 186 M76 168 Q80 154 100 158 H300 M76 168 Q76 182 100 182 H300 M88 162 V180 M100 214 L112 180 M60 204 H104" strokeWidth="4" />
      <path d="M436 106 Q440 100 540 88 Q552 90 551 108 L550 150 Q540 160 522 158 L508 130 Q506 112 490 112 Q476 112 474 130 L464 160 Q440 160 436 150Z M468 162 L480 132 Q484 122 500 124 L516 156 M440 110 L544 98 M482 116 V140" strokeWidth="4" />
      <Engine />
    </g>
  );
}

function VehicleDrawing() {
  return (
    <svg viewBox="7 149 1129 727" className="block w-full h-auto" role="img" aria-label="整车总布置图">
      <g fill="none" stroke="#939393" strokeWidth="2.600">
        <Cab />
        <Rear />
        <Tank />
      </g>
      <g fill="none" stroke="#d03a3a" strokeWidth="1">
        <path d="M453.500 382 V416" stroke="#c22" />
        <path d="M582 353 V394" stroke="#dd8f8f" strokeWidth="2" />
        <path d="M747.500 357 V390" />
        <path d="M742.500 695 L739.500 740" />
        <path d="M1051 271 L1067.500 280.500 V776.500 L1051 785.500" />
        <path d="M1067 536 H1086" stroke="#dc6b6b" strokeWidth="2" />
      </g>
      <g className="font-['Noto_Sans_CJK_SC',sans-serif] text-[17px] font-medium" fill="#1010c0">
        <text x="412" y="376">
          <tspan className="font-['Liberation_Serif',serif] text-[14px]">LNG</tspan>供气系统总成
        </text>
        <text x="558" y="349">蓄电池</text>
        <text x="726" y="344">车轮护罩</text>
        <text x="708" y="753">车轮护罩</text>
        <text x="1088" y="541" className="font-['Liberation_Serif',serif]">1</text>
      </g>
    </svg>
  );
}

const columns = [
  { title: "序号", width: "w-[52px]", value: "1" },
  { title: "图号", width: "w-[312px]", value: "H400000000518" },
  { title: "名称", width: "w-[311px]", value: "整车总布置图" },
  { title: "层级", width: "w-[124px]", value: "2" },
  { title: "版本", width: "w-[56px]", value: "A" },
  { title: "数量", width: "w-[49px]", value: "1" },
  { title: "配件属性", width: "w-[86px]", value: "Y" }
];

export default function App() {
  const [sheet, setSheet] = useState("5");
  const [full, setFull] = useState(false);

  return (
    <div className={`${uiFont} grid min-h-screen grid-cols-[1137fr_980fr] gap-[22px] overflow-hidden bg-white pl-[3px] pt-0.5 text-black`}>
      <section className="flex min-w-0 flex-col border border-b-0 border-[#808080]">
        <header className="flex h-[67px] shrink-0 items-center bg-linear-to-b from-[#ebeae9] to-[#d5d1cd] pl-[23px] pr-[19px]">
          <label htmlFor="sheet" className="text-[22px] font-bold">工作表</label>
          <div className="relative ml-3">
            <select id="sheet" value={sheet} onChange={(e) => setSheet(e.target.value)} className="h-[43px] w-[221px] appearance-none rounded-lg border border-[#808080] bg-white pl-[17px] text-[22px]">
              <option value="5">整车总布置图_5</option>
            </select>
            <svg className="pointer-events-none absolute right-[9px] top-4" width="18" height="12" viewBox="0 0 18 12" fill="none" stroke="#111" strokeWidth="2">
              <path d="M1 1.500 L9 9.500 L17 1.500" />
            </svg>
          </div>
          <button aria-label="刷新" className="ml-[21px]"><RefreshIcon /></button>
          <div className="ml-auto flex items-center gap-[11px]">
            <button aria-label="打印视图"><PrintViewIcon /></button>
            <button aria-label="展开"><ExpandIcon /></button>
          </div>
        </header>
        <div className="mx-0.5 mt-[78px] grow border border-b-0 border-[#999] shadow-[inset_1px_1px_0_#ddd]">
          <VehicleDrawing />
        </div>
      </section>

      <section className="min-w-0 overflow-hidden">
        <div className="min-w-[1020px]">
          <header className="flex h-[67px] items-center gap-1.5 bg-linear-to-b from-[#ebeae9] to-[#d5d1cd] pl-3.5 pr-[26px]">
            <button aria-label="打印列表"><PrintListIcon /></button>
            <button aria-label="打印图纸"><PrintDrawingIcon /></button>
            <label htmlFor="full" className="ml-auto text-[22px] font-bold">完整表</label>
            <input id="full" type="checkbox" checked={full} onChange={(e) => setFull(e.target.checked)} className="ml-1.5 size-5 appearance-none rounded border border-[#767676] bg-white" />
          </header>
          <table className="mt-[23px] w-[990px] table-fixed border-collapse">
            <thead>
              <tr className="h-[38px] bg-linear-to-b from-white to-[#e4e4e4]">
                {columns.map((c) => (
                  <th key={c.title} className={`${c.width} whitespace-nowrap border border-[#808080] p-0 text-[18px] leading-6 font-bold`}>{c.title}</th>
                ))}
              </tr>
            </thead>
            <tbody>
              <tr className="h-[38px]">
                {columns.map((c) => (
                  <td key={c.title} className="border border-[#808080] px-1.5 pt-0.5 pb-0 font-['Liberation_Serif','Noto_Sans_CJK_SC',serif] text-[19px] leading-6 font-light">{c.value}</td>
                ))}
              </tr>
            </tbody>
          </table>
        </div>
      </section>
    </div>
  );
}
